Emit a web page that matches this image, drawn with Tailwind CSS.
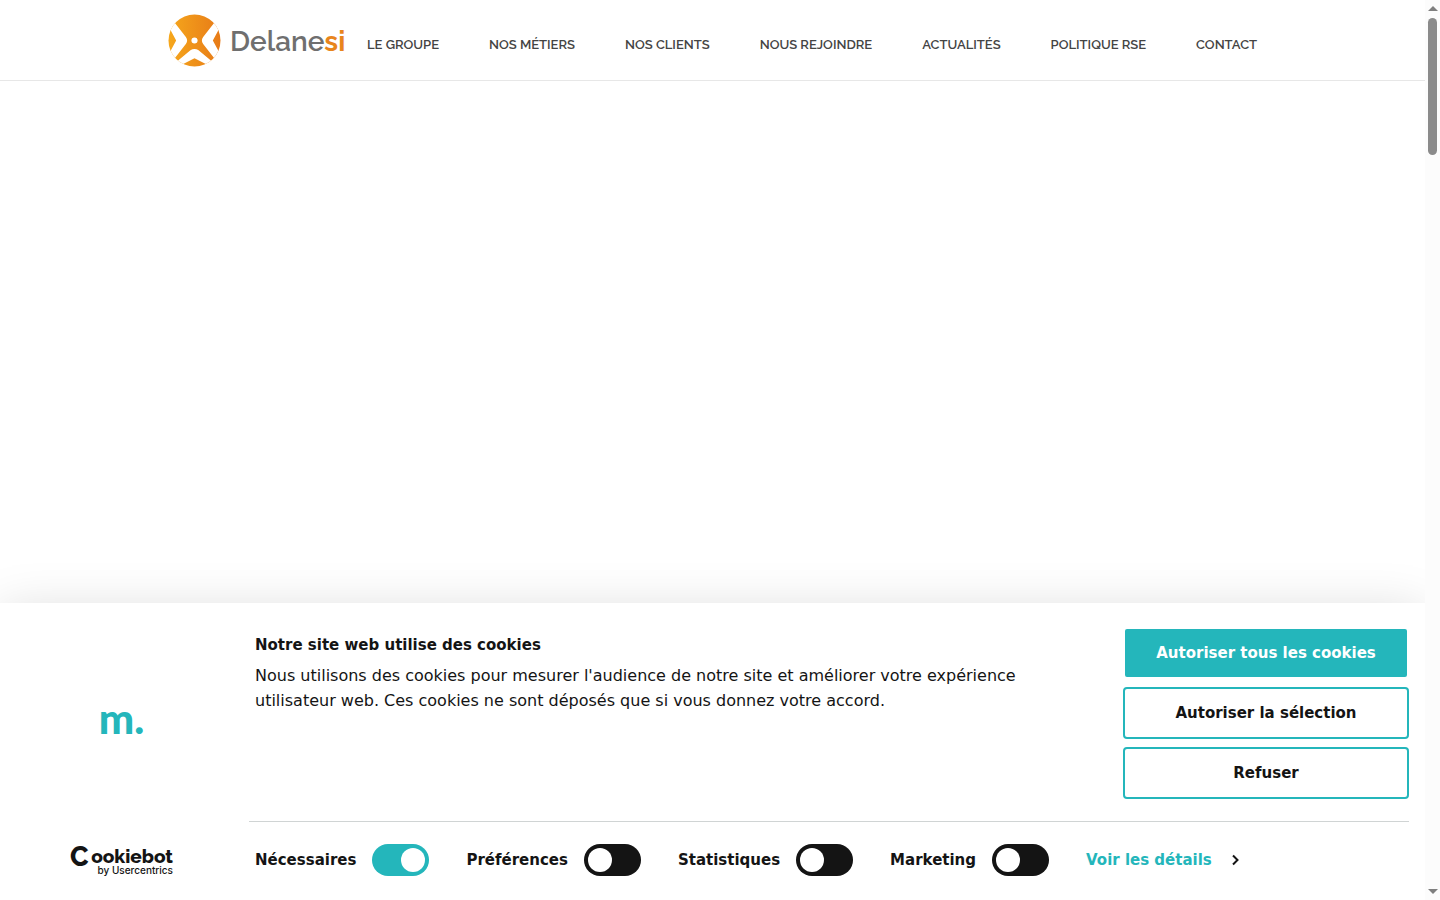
<!DOCTYPE html>
<html lang="fr">
<head>
  <meta charset="UTF-8">
  <meta name="viewport" content="width=device-width, initial-scale=1">
  <title>Delanesi</title>
  <script src="https://cdn.jsdelivr.net/npm/@tailwindcss/browser@4"></script>
</head>
<body class="h-screen flex overflow-hidden bg-white text-[#141414] font-['DejaVu_Sans',sans-serif]">

  <div class="flex-1 min-w-0 flex flex-col overflow-hidden">

    <!-- HEADER -->
    <header class="h-[81px] shrink-0 border-b border-[#e7e7e7] flex items-center pl-[168px]">
      <a href="#" class="flex items-center gap-[9px] w-[199px] shrink-0" aria-label="Delanesi">
        <svg class="size-[53px] shrink-0" viewBox="0 0 52 52">
          <defs>
            <linearGradient id="orange" x1="0" y1="0" x2="1" y2="0">
              <stop offset="0" stop-color="#f6a81c"/>
              <stop offset="1" stop-color="#e77a17"/>
            </linearGradient>
            <clipPath id="disc"><circle cx="26" cy="26" r="25.5"/></clipPath>
          </defs>
          <g clip-path="url(#disc)">
            <rect width="52" height="52" fill="url(#orange)"/>
            <g fill="#fff">
              <path d="M1 13 L7 9 L17.500 22.500 Q20 26 17.500 29.500 L7 43 L1 39 L8 26 Z"/>
              <path d="M51 13 L45 9 L34.500 22.500 Q32 26 34.500 29.500 L45 43 L51 39 L44 26 Z"/>
              <path d="M7 48 L22 35.500 Q26 33 30 35.500 L45 48 L39 50 L26 43.500 L13 50 Z"/>
              <circle cx="26" cy="26" r="3"/>
            </g>
          </g>
        </svg>
        <span class="pt-1 font-['Raleway','Lato',sans-serif] text-[28px] leading-8 font-semibold text-[#6f6f6f]">Delane<span class="font-bold text-[#e8851c]">si</span></span>
      </a>
      <nav class="flex gap-[50px] pt-[10px] whitespace-nowrap font-['Raleway','Open_Sans',sans-serif] text-[13px] leading-5 font-semibold text-[#444]">
        <a href="#">LE GROUPE</a>
        <a href="#">NOS MÉTIERS</a>
        <a href="#">NOS CLIENTS</a>
        <a href="#">NOUS REJOINDRE</a>
        <a href="#">ACTUALITÉS</a>
        <a href="#">POLITIQUE RSE</a>
        <a href="#">CONTACT</a>
      </nav>
    </header>

    <main class="flex-1"></main>

    <!-- COOKIE BANNER -->
    <section role="dialog" aria-labelledby="cookieTitle" class="shrink-0 flex bg-white shadow-[0_8px_48px_rgba(0,0,0,0.15)] text-[15px]">
      <div class="w-[243px] shrink-0 flex flex-col items-center mr-[6px]">
        <div class="flex-1 flex items-center pb-3">
          <span class="font-['Lato',sans-serif] text-[42px] leading-none font-black text-[#24b6bb]">m.</span>
        </div>
        <a href="#" class="h-[56px]" aria-label="Cookiebot by Usercentrics">
          <svg class="w-[104px] h-[34px] overflow-visible" viewBox="0 0 104 34" fill="#141414">
            <g class="font-['Raleway','Inter',sans-serif] font-extrabold">
              <text x="0" y="22" font-size="27">C</text>
              <text x="103" y="19" font-size="19" text-anchor="end">ookiebot</text>
            </g>
            <text class="font-['Inter',sans-serif]" x="103" y="30" font-size="10" font-weight="500" text-anchor="end">by Usercentrics</text>
          </svg>
        </a>
      </div>

      <div class="flex-1 min-w-0 pr-4">
        <div class="flex justify-between pt-6 pb-[22px] pl-[6px] border-b border-[#d0d4d4]">
          <div class="max-w-[800px] pt-[6px]">
            <h2 id="cookieTitle" class="font-bold leading-6 mb-[6px]">Notre site web utilise des cookies</h2>
            <p class="text-base leading-[25px]">Nous utilisons des cookies pour mesurer l'audience de notre site et améliorer votre expérience utilisateur web. Ces cookies ne sont déposés que si vous donnez votre accord.</p>
          </div>
          <div class="w-[286px] shrink-0 flex flex-col gap-2 font-bold">
            <button class="h-[52px] border-2 border-white rounded bg-[#24b6bb] text-white">Autoriser tous les cookies</button>
            <button class="h-[52px] border-2 border-[#24b6bb] rounded">Autoriser la sélection</button>
            <button class="h-[52px] border-2 border-[#24b6bb] rounded">Refuser</button>
          </div>
        </div>

        <div class="flex items-center gap-[37px] pt-[22px] pb-6 pl-[6px] font-bold">
          <label class="flex items-center gap-4">Nécessaires
            <input type="checkbox" checked disabled class="appearance-none w-[57px] h-8 rounded-full bg-[#141414] p-1 flex checked:bg-[#24b6bb] checked:justify-end before:size-6 before:rounded-full before:bg-white">
          </label>
          <label class="flex items-center gap-4">Préférences
            <input type="checkbox" class="appearance-none w-[57px] h-8 rounded-full bg-[#141414] p-1 flex checked:bg-[#24b6bb] checked:justify-end before:size-6 before:rounded-full before:bg-white">
          </label>
          <label class="flex items-center gap-4">Statistiques
            <input type="checkbox" class="appearance-none w-[57px] h-8 rounded-full bg-[#141414] p-1 flex checked:bg-[#24b6bb] checked:justify-end before:size-6 before:rounded-full before:bg-white">
          </label>
          <label class="flex items-center gap-4">Marketing
            <input type="checkbox" class="appearance-none w-[57px] h-8 rounded-full bg-[#141414] p-1 flex checked:bg-[#24b6bb] checked:justify-end before:size-6 before:rounded-full before:bg-white">
          </label>
          <a href="#" class="flex items-center gap-[18px] text-[#24b6bb]">Voir les détails
            <svg class="w-[10px] h-3" viewBox="0 0 10 12" fill="none" stroke="#141414" stroke-width="2"><path d="M3 1.500 L7.500 6 L3 10.500"/></svg>
          </a>
        </div>
      </div>
    </section>
  </div>

  <!-- SCROLLBAR -->
  <div class="w-[15px] shrink-0 bg-[#fcfcfc] flex flex-col items-center py-[6px]">
    <svg class="w-[10px] h-[5px]" viewBox="0 0 10 5"><path d="M0 5 L5 0 L10 5 Z" fill="#7f7f7f"/></svg>
    <div class="w-[9px] h-[137px] mt-[7px] rounded-full bg-[#8b8b8b]"></div>
    <svg class="w-[10px] h-[5px] mt-auto" viewBox="0 0 10 5"><path d="M0 0 L5 5 L10 0 Z" fill="#7f7f7f"/></svg>
  </div>

</body>
</html>
